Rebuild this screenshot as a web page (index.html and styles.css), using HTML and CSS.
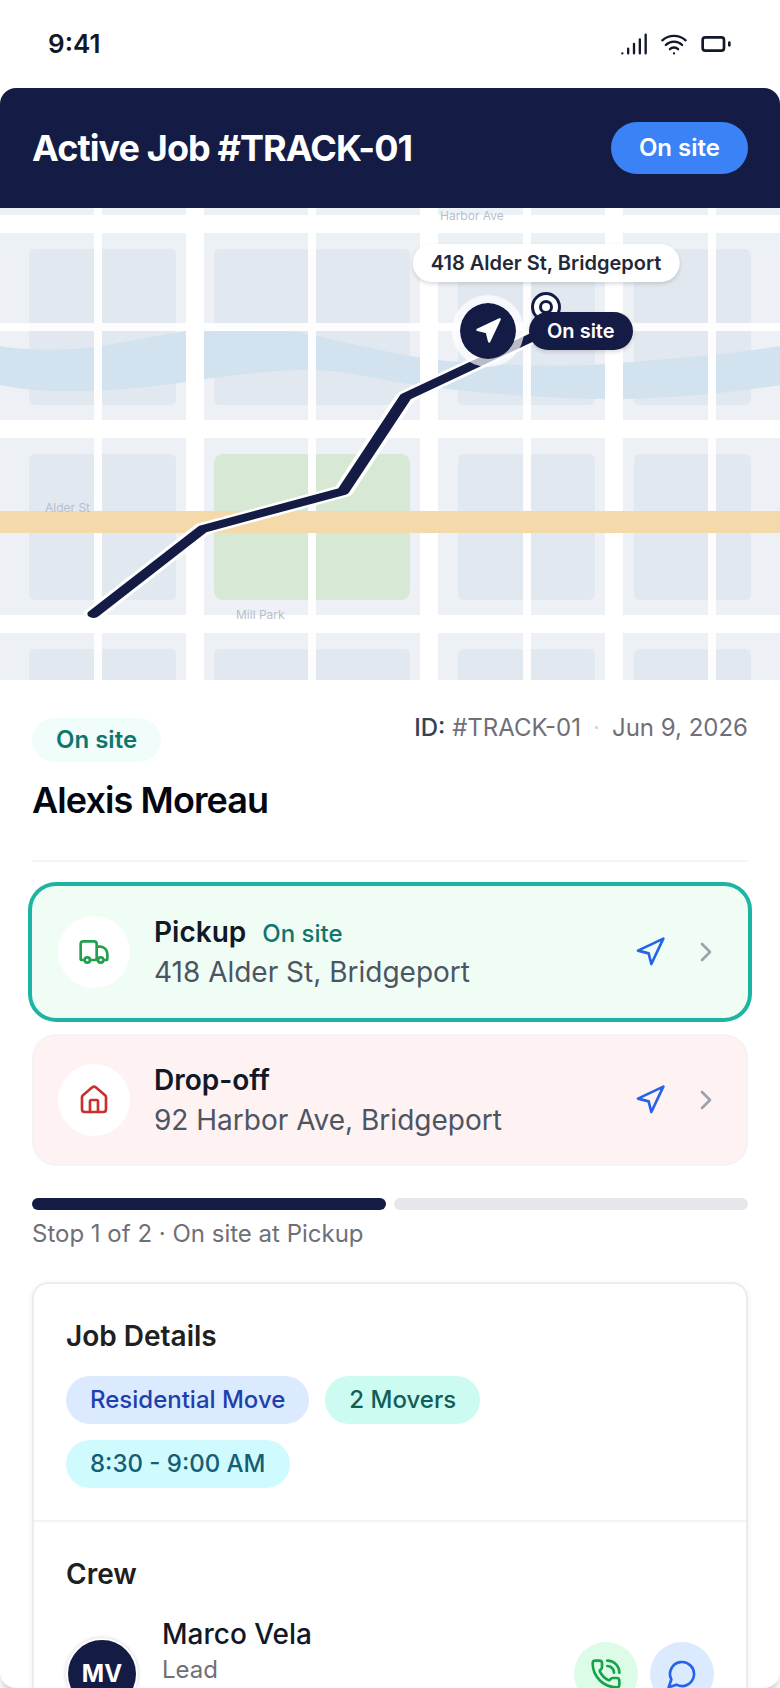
FILE: index.html
```html
<!DOCTYPE html>
<html lang="en">
<head>
<meta charset="UTF-8">
<meta name="viewport" content="width=device-width, initial-scale=1.0">
<title>Active Job #TRACK-01</title>
<link rel="stylesheet" href="styles.css">
</head>
<body>
<div class="status-bar">
    <span class="time">9:41</span>
    <div class="status-icons">
        <svg class="icon icon-sm" viewBox="0 0 24 24"><path d="M2 20h.01M7 20v-4M12 20v-8M17 20V8M22 4v16"/></svg>
        <svg class="icon icon-sm" viewBox="0 0 24 24"><path d="M12 20h.01M2 8.82a15 15 0 0 1 20 0M5 12.859a10 10 0 0 1 14 0M8.5 16.429a5 5 0 0 1 7 0"/></svg>
        <svg class="icon" viewBox="0 0 24 24"><rect x="2" y="7" width="16" height="10" rx="2"/><path d="M22 11v2"/></svg>
    </div>
</div>

<main class="sheet">
    <header class="job-header">
        <h1>Active Job #TRACK-01</h1>
        <span class="job-status">On site</span>
    </header>

    <section class="map">
        <svg class="map-tiles" viewBox="0 0 780 472" preserveAspectRatio="xMidYMid slice">
            <rect width="780" height="472" fill="#edf1f5"/>
            <!-- blocks -->
            <g fill="#e2e8f0">
                <rect x="29" y="41" width="147" height="156" rx="6"/>
                <rect x="214" y="41" width="196" height="156" rx="6"/>
                <rect x="458" y="41" width="137" height="156" rx="6"/>
                <rect x="634" y="41" width="117" height="156" rx="6"/>
                <rect x="29" y="246" width="147" height="146" rx="6"/>
                <rect x="458" y="246" width="137" height="146" rx="6"/>
                <rect x="634" y="246" width="117" height="146" rx="6"/>
                <rect x="29" y="441" width="147" height="60" rx="6"/>
                <rect x="214" y="441" width="196" height="60" rx="6"/>
                <rect x="458" y="441" width="137" height="60" rx="6"/>
                <rect x="634" y="441" width="117" height="60" rx="6"/>
            </g>
            <rect x="214" y="246" width="196" height="146" rx="9" fill="#d7e8d4"/>
            <!-- river -->
            <path fill="#d2e2ee" d="M0 138C30 143 70 143 101 138S160 127 186 123S270 118 308 126S400 148 438 152S560 160 605 156S720 148 780 138V177C740 184 670 191 614 191S500 187 438 180S350 162 308 162S230 168 186 174S60 190 0 177Z"/>
            <!-- streets -->
            <g stroke="#fff" stroke-width="8" opacity=".95">
                <path d="M98 0V472M312 0V472M527 0V472M712 0V472M0 119H780"/>
            </g>
            <g stroke="#fff" stroke-width="18">
                <path d="M195 0V472M429 0V472M614 0V472M0 16H780M0 221H780M0 416H780"/>
            </g>
            <path d="M0 314H780" stroke="#f4d9ab" stroke-width="22"/>
            <g class="map-text">
                <text x="440" y="12">Harbor Ave</text>
                <text x="45" y="304">Alder St</text>
                <text x="236" y="411">Mill Park</text>
            </g>
            <!-- route, in percent of the map -->
            <g transform="scale(7.8 4.72)" fill="none" stroke-linecap="round" stroke-linejoin="round">
                <path d="M12 86L26 68L44 60L52 40L70 26" stroke="#fff" stroke-width="2.600"/>
                <path d="M12 86L26 68L44 60L52 40L70 26" stroke="#141c46" stroke-width="1.600"/>
            </g>
        </svg>
        <div class="marker vehicle">
            <svg viewBox="0 0 24 24"><path d="M3 11L22 2L13 21L11 13Z"/></svg>
        </div>
        <div class="marker stop">
            <span class="map-pill address">418 Alder St, Bridgeport</span>
            <span class="stop-dot"></span>
            <span class="map-pill state">On site</span>
        </div>
    </section>

    <div class="content">
        <section class="customer">
            <div class="customer-main">
                <span class="badge">On site</span>
                <h2>Alexis Moreau</h2>
            </div>
            <div class="customer-meta">
                <span><b>ID:</b> #TRACK-01</span>
                <i>·</i>
                <span>Jun 9, 2026</span>
            </div>
        </section>

        <section class="stops">
            <div class="stop-card pickup active">
                <span class="stop-icon">
                    <svg class="icon" viewBox="0 0 24 24"><path d="M14 18V6a2 2 0 0 0-2-2H4a2 2 0 0 0-2 2v11a1 1 0 0 0 1 1h2M15 18H9M19 18h2a1 1 0 0 0 1-1v-3.300a5.500 5.500 0 0 0-5-5.700H14"/><circle cx="17" cy="18" r="2"/><circle cx="7" cy="18" r="2"/></svg>
                </span>
                <div class="stop-info">
                    <div class="stop-title"><h3>Pickup</h3><span>On site</span></div>
                    <p>418 Alder St, Bridgeport</p>
                </div>
                <button class="navigate" aria-label="Navigate to pickup">
                    <svg class="icon" viewBox="0 0 24 24"><path d="M3 11L22 2L13 21L11 13Z"/></svg>
                </button>
                <button class="open" aria-label="Open pickup">
                    <svg class="icon" viewBox="0 0 24 24"><path d="M9 18l6-6-6-6"/></svg>
                </button>
            </div>
            <div class="stop-card dropoff">
                <span class="stop-icon">
                    <svg class="icon" viewBox="0 0 24 24"><path d="M15 21v-8a1 1 0 0 0-1-1h-4a1 1 0 0 0-1 1v8"/><path d="M3 10a2 2 0 0 1 .709-1.528l7-5.999a2 2 0 0 1 2.582 0l7 5.999A2 2 0 0 1 21 10v9a2 2 0 0 1-2 2H5a2 2 0 0 1-2-2z"/></svg>
                </span>
                <div class="stop-info">
                    <div class="stop-title"><h3>Drop-off</h3></div>
                    <p>92 Harbor Ave, Bridgeport</p>
                </div>
                <button class="navigate" aria-label="Navigate to drop-off">
                    <svg class="icon" viewBox="0 0 24 24"><path d="M3 11L22 2L13 21L11 13Z"/></svg>
                </button>
                <button class="open" aria-label="Open drop-off">
                    <svg class="icon" viewBox="0 0 24 24"><path d="M9 18l6-6-6-6"/></svg>
                </button>
            </div>
        </section>

        <section class="progress">
            <div class="progress-track">
                <span class="done"></span>
                <span></span>
            </div>
            <p>Stop 1 of 2 · On site at Pickup</p>
        </section>

        <div class="card">
            <section class="card-section">
                <h3>Job Details</h3>
                <div class="chips">
                    <span class="chip blue">Residential Move</span>
                    <span class="chip teal">2 Movers</span>
                    <span class="chip cyan">8:30 - 9:00 AM</span>
                </div>
            </section>
            <section class="card-section">
                <h3>Crew</h3>
                <div class="crew-row">
                    <span class="avatar">MV</span>
                    <div class="crew-info">
                        <strong>Marco Vela</strong>
                        <span>Lead</span>
                    </div>
                    <div class="crew-actions">
                        <button class="round call" aria-label="Call Marco Vela">
                            <svg class="icon" viewBox="0 0 24 24"><path d="M13 2a9 9 0 0 1 9 9M13 6a5 5 0 0 1 5 5"/><path d="M13.832 16.568a1 1 0 0 0 1.213-.303l.355-.465A2 2 0 0 1 17 15h3a2 2 0 0 1 2 2v3a2 2 0 0 1-2 2A18 18 0 0 1 2 4a2 2 0 0 1 2-2h3a2 2 0 0 1 2 2v3a2 2 0 0 1-.8 1.6l-.468.351a1 1 0 0 0-.292 1.233 14 14 0 0 0 6.392 6.384"/></svg>
                        </button>
                        <button class="round chat" aria-label="Message Marco Vela">
                            <svg class="icon" viewBox="0 0 24 24"><path d="M7.900 20A9 9 0 1 0 4 16.100L2 22Z"/></svg>
                        </button>
                    </div>
                </div>
            </section>
        </div>
    </div>
</main>
</body>
</html>
```
FILE: styles.css
```css
* {
    box-sizing: border-box;
}
body {
    margin: 0;
    height: 100vh;
    display: flex;
    flex-direction: column;
    overflow: hidden;
    background-color: #fff;
    font-family: Inter, "Liberation Sans", sans-serif;
    font-size: 24px;
    line-height: 32px;
    color: #111827;
}
h1, h2, h3, p {
    margin: 0;
}
button {
    border: 0;
    padding: 0;
    background: none;
    cursor: pointer;
}
.icon {
    display: block;
    width: 32px;
    height: 32px;
    fill: none;
    stroke: currentColor;
    stroke-width: 2;
    stroke-linecap: round;
    stroke-linejoin: round;
}
.icon-sm {
    width: 28px;
    height: 28px;
}

/* status bar */
.status-bar {
    display: flex;
    justify-content: space-between;
    align-items: center;
    height: 88px;
    flex: none;
    padding: 0 48px;
}
.time {
    font-size: 26px;
    font-weight: 600;
}
.status-icons {
    display: flex;
    align-items: center;
    gap: 12px;
}

.sheet {
    flex: 1;
    min-height: 0;
    overflow: hidden;
    border-radius: 16px;
    background-color: #fff;
    box-shadow: 0 8px 8px -2px rgba(0, 0, 0, 0.2);
}
.job-header {
    display: flex;
    justify-content: space-between;
    align-items: center;
    padding: 34px 32px;
    background-color: #141c46;
    color: #fff;
}
.job-header h1 {
    font-size: 36px;
    line-height: 44px;
    font-weight: 700;
    letter-spacing: -0.025em;
}
.job-status {
    padding: 10px 28px;
    border-radius: 26px;
    background-color: #3b82f6;
    font-weight: 600;
}

/* map */
.map {
    position: relative;
    height: 472px;
    overflow: hidden;
}
.map-tiles {
    display: block;
    width: 100%;
    height: 100%;
}
.map-text {
    font-size: 12px;
    fill: #b6bfcc;
}
.marker {
    position: absolute;
    transform: translate(-50%, -50%);
}
.vehicle {
    left: 62.6%;
    top: 26%;
    width: 72px;
    height: 72px;
    padding: 14px;
    border: 8px solid rgba(255, 255, 255, 0.7);
    border-radius: 50%;
    background-color: #141c46;
    background-clip: padding-box;
}
.vehicle svg {
    display: block;
    width: 28px;
    height: 28px;
    fill: #fff;
    stroke: #fff;
    stroke-width: 2;
    stroke-linejoin: round;
}
.stop {
    left: 70%;
    top: 21%;
    width: 30px;
    height: 30px;
}
.stop-dot {
    position: absolute;
    inset: 0;
    border: 3px solid #141c46;
    border-radius: 50%;
    background-color: #fff;
}
.stop-dot::after {
    content: "";
    position: absolute;
    inset: 5px;
    border: 3px solid #141c46;
    border-radius: 50%;
}
.map-pill {
    position: absolute;
    padding: 5px 18px;
    border-radius: 19px;
    font-size: 20px;
    line-height: 28px;
    font-weight: 600;
    white-space: nowrap;
    box-shadow: 0 2px 4px rgba(0, 0, 0, 0.15);
}
.address {
    left: 50%;
    bottom: 40px;
    transform: translateX(-50%);
    background-color: #fff;
    color: #1f2937;
}
.state {
    left: -2px;
    top: 20px;
    background-color: #141c46;
    color: #fff;
}

/* content */
.content {
    padding: 32px;
}
.customer {
    display: flex;
    justify-content: space-between;
    padding-bottom: 32px;
    border-bottom: 2px solid #f3f4f6;
}
.customer-main {
    display: flex;
    flex-direction: column;
    align-items: flex-start;
    gap: 16px;
    padding: 6px 0;
}
.badge {
    padding: 6px 24px;
    border-radius: 22px;
    background-color: #f0fdfa;
    color: #0f766e;
    font-weight: 600;
}
.customer h2 {
    font-size: 36px;
    line-height: 44px;
    font-weight: 600;
    letter-spacing: -0.025em;
    color: #030712;
}
.customer-meta {
    display: flex;
    gap: 12px;
    color: #6f6f78;
}
.customer-meta b {
    font-weight: 500;
    color: #334155;
}
.customer-meta i {
    font-style: normal;
    color: #d1d5db;
}

.stops {
    display: flex;
    flex-direction: column;
    gap: 16px;
    margin-top: 24px;
}
.stop-card {
    display: flex;
    align-items: center;
    gap: 24px;
    padding: 24px;
    border: 2px solid #f3f4f6;
    border-radius: 24px;
    font-size: 28px;
    line-height: 40px;
}
.pickup {
    background-color: #f0fdf4;
}
.dropoff {
    background-color: #fef2f2;
}
.stop-card.active {
    border-color: #f0fdf4;
    box-shadow: 0 0 0 4px #1cb5a4;
}
.stop-icon {
    display: flex;
    align-items: center;
    justify-content: center;
    width: 72px;
    height: 72px;
    border-radius: 50%;
    background-color: #fff;
}
.pickup .stop-icon {
    color: #22a04f;
}
.dropoff .stop-icon {
    color: #cb2f2f;
}
.stop-info {
    flex: 1;
}
.stop-title {
    display: flex;
    align-items: baseline;
    gap: 16px;
}
.stop-title h3 {
    font-size: 28px;
    font-weight: 600;
}
.stop-title span {
    font-size: 24px;
    line-height: 32px;
    font-weight: 500;
    color: #0f766e;
}
.stop-info p {
    color: #4b5563;
}
.navigate {
    color: #2563eb;
}
.open {
    color: #9ca3af;
}

.progress {
    display: flex;
    flex-direction: column;
    gap: 8px;
    margin: 32px 0;
    color: #6f6f78;
}
.progress-track {
    display: flex;
    gap: 8px;
}
.progress-track span {
    flex: 1;
    height: 12px;
    border-radius: 6px;
    background-color: #e5e7eb;
}
.progress-track .done {
    background-color: #141c46;
}

/* details card */
.card {
    border: 2px solid #ececee;
    border-radius: 16px;
    box-shadow: 0 2px 6px rgba(0, 0, 0, 0.08);
}
.card-section {
    padding: 32px;
}
.card-section + .card-section {
    border-top: 2px solid #f3f4f6;
}
.card-section h3 {
    margin-bottom: 20px;
    font-size: 28px;
    line-height: 40px;
    font-weight: 600;
    color: #202020;
}
.chips {
    display: flex;
    flex-wrap: wrap;
    gap: 16px;
    max-width: 480px;
}
.chip {
    padding: 8px 24px;
    border-radius: 24px;
    font-weight: 500;
}
.blue {
    background-color: #dbeafe;
    color: #1e40af;
}
.teal {
    background-color: #ccfbf1;
    color: #115e59;
}
.cyan {
    background-color: #cffafe;
    color: #155e75;
}
.crew-row {
    display: flex;
    align-items: center;
    gap: 24px;
    min-height: 120px;
}
.avatar {
    display: flex;
    align-items: center;
    justify-content: center;
    width: 72px;
    height: 72px;
    border: 2px solid #fff;
    border-radius: 50%;
    background-color: #141c46;
    box-shadow: 0 0 4px rgba(20, 28, 70, 0.2);
    color: #fff;
    font-weight: 700;
}
.crew-info {
    flex: 1;
    align-self: stretch;
    display: flex;
    flex-direction: column;
}
.crew-info strong {
    font-size: 28px;
    line-height: 40px;
    font-weight: 500;
}
.crew-info span {
    color: #6f6f78;
}
.crew-actions {
    display: flex;
    gap: 12px;
}
.round {
    display: flex;
    align-items: center;
    justify-content: center;
    width: 64px;
    height: 64px;
    border-radius: 50%;
}
.call {
    background-color: #dcfce7;
    color: #16a34a;
}
.chat {
    background-color: #dbeafe;
    color: #2563eb;
}
```
